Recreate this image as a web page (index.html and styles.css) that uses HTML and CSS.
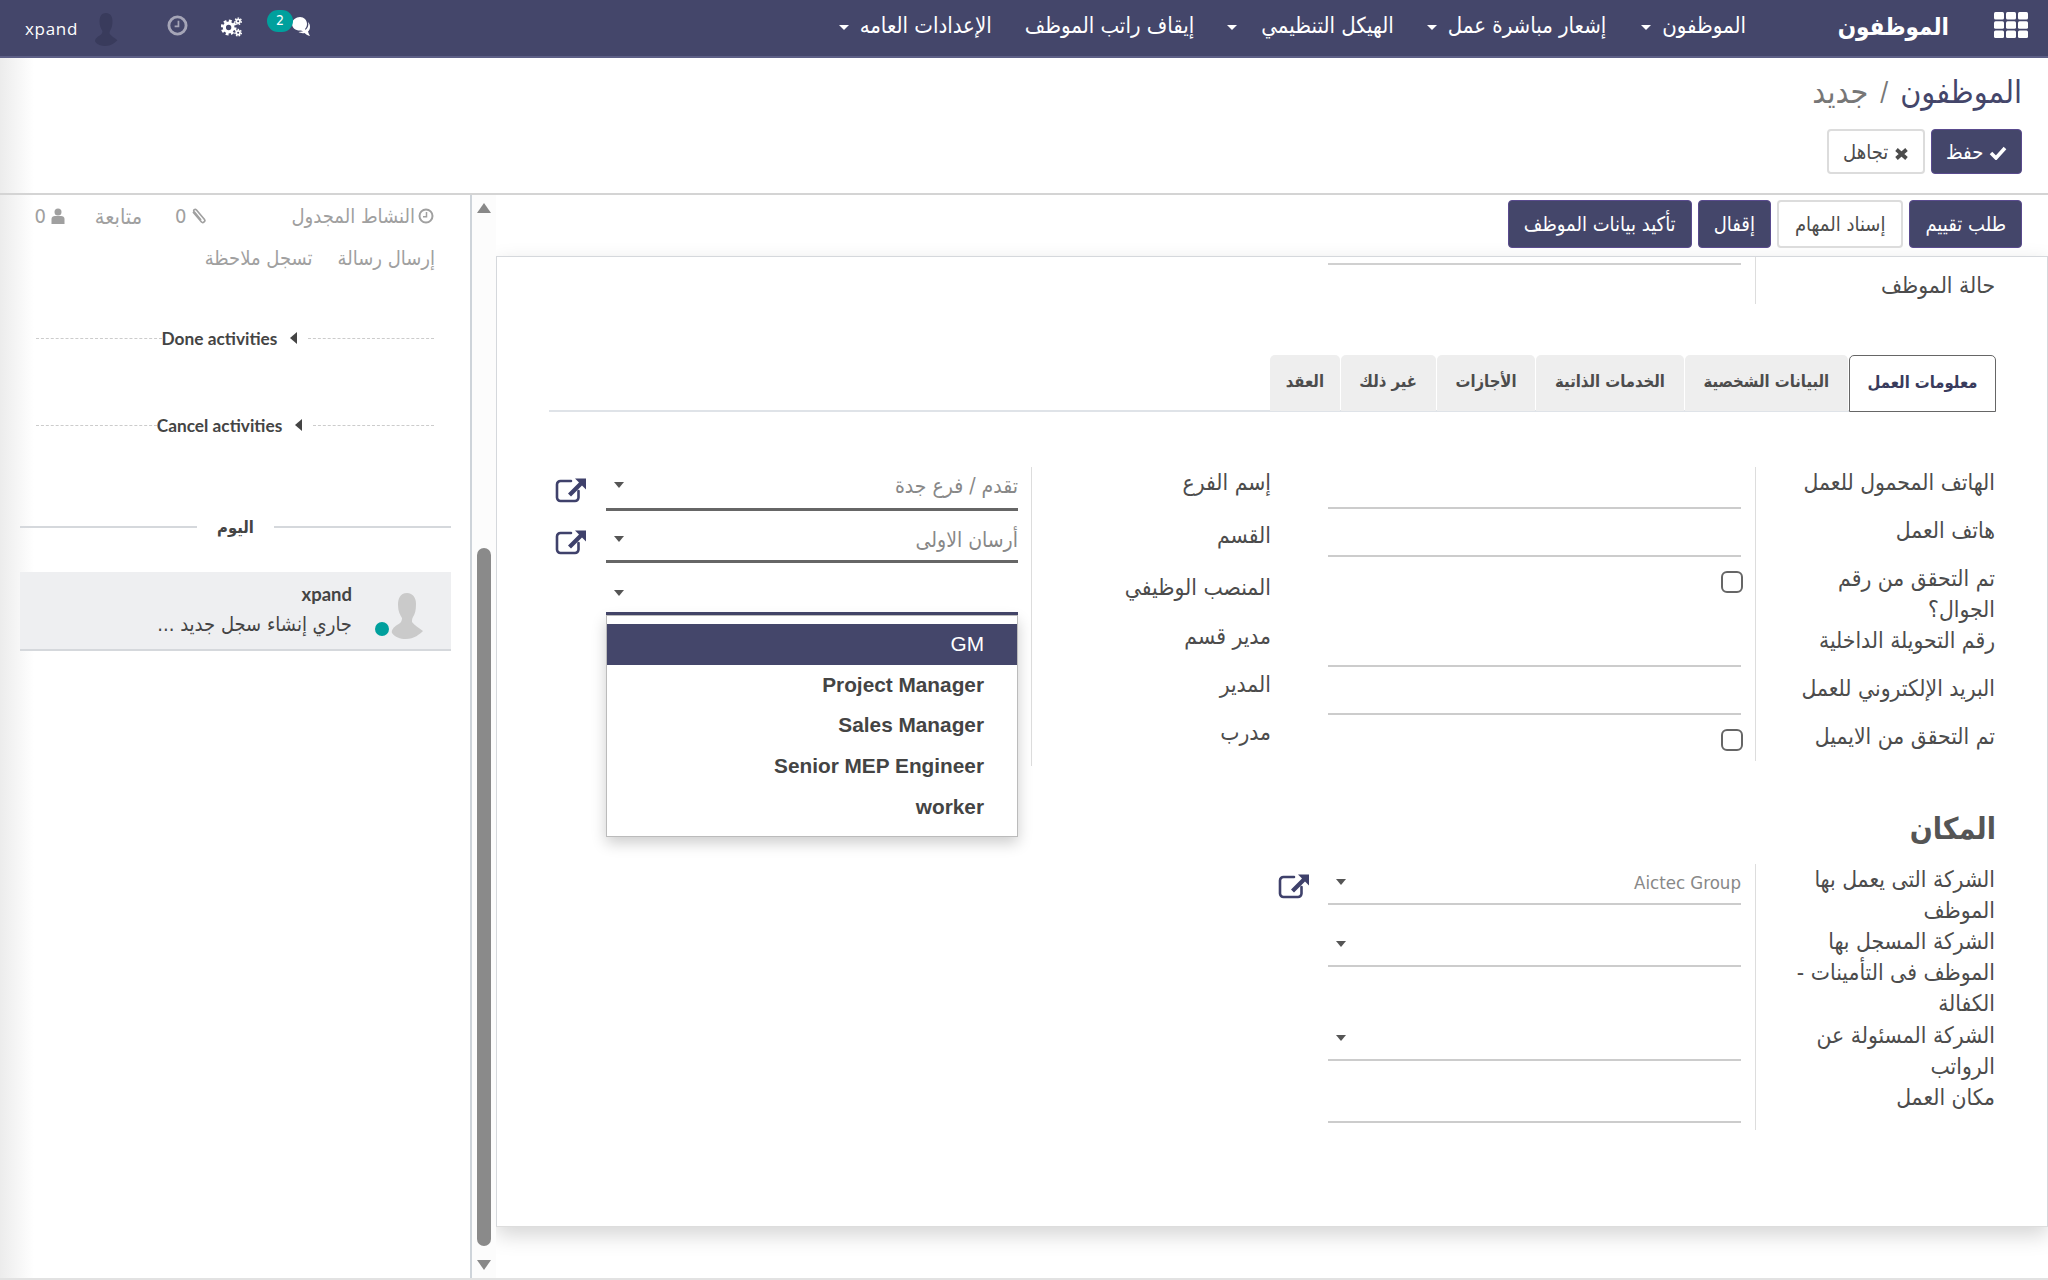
FILE: index.html
```html
<!DOCTYPE html>
<html lang="ar" dir="rtl">
<head>
    <meta charset="UTF-8">
    <title>الموظفون</title>
    <link rel="stylesheet" href="styles.css">
</head>
<body>
    <svg class="sprites" xmlns="http://www.w3.org/2000/svg">
        <symbol id="i-ext" viewBox="0 0 31 27">
            <path d="M16 5H5.5A3.5 3.5 0 0 0 2 8.500V21.500A3.500 3.500 0 0 0 5.500 25H20A3.500 3.500 0 0 0 23.500 21.500V15" fill="none" stroke="currentColor" stroke-width="2.600" stroke-linecap="round"/>
            <path d="M13 17.500L24 6.500L20 2.500H31V13.500L27 9.500L16 20.500Z" fill="currentColor"/>
        </symbol>
        <symbol id="i-user" viewBox="0 0 32 46">
            <path d="M16 0C9 0 7 6 7 12C7 18 9 22 11 25C11 28 10 30 6 32C3 34 0 37 1 40C4 44 9 46 15 46C23 46 29 41 32 38C28 35 23 32 21 29C21 27 21 26 22 24C24 21 25 17 25 11C25 5 22 0 16 0Z" fill="currentColor"/>
        </symbol>
    </svg>

    <header class="navbar">
        <svg class="apps" viewBox="0 0 34 26">
            <g fill="#fff">
                <rect x="0" y="0" width="10" height="7.500" rx="1.500"/><rect x="12" y="0" width="10" height="7.500" rx="1.500"/><rect x="24" y="0" width="10" height="7.500" rx="1.500"/>
                <rect x="0" y="9.200" width="10" height="7.500" rx="1.500"/><rect x="12" y="9.200" width="10" height="7.500" rx="1.500"/><rect x="24" y="9.200" width="10" height="7.500" rx="1.500"/>
                <rect x="0" y="18.500" width="10" height="7.500" rx="1.500"/><rect x="12" y="18.500" width="10" height="7.500" rx="1.500"/><rect x="24" y="18.500" width="10" height="7.500" rx="1.500"/>
            </g>
        </svg>
        <a class="brand">الموظفون</a>
        <nav class="menu">
            <a class="menu-item has-caret">الموظفون</a>
            <a class="menu-item has-caret">إشعار مباشرة عمل</a>
            <a class="menu-item has-caret menu-item-wide">الهيكل التنظيمي</a>
            <a class="menu-item">إيقاف راتب الموظف</a>
            <a class="menu-item has-caret">الإعدادات العامه</a>
        </nav>
        <div class="systray">
            <div class="tray-chat">
                <svg class="chat-icon" viewBox="0 0 18 19">
                    <path d="M0 7C0 3 4 0 8 0C12 0 15 3 15 7C15 9 14 11 13 12C13.500 13 14.500 14 15 15C12.500 15 10.500 14 9 13.500C4 14 0 11 0 7Z" fill="#fff"/>
                    <path d="M16 5C17.500 6.500 18 8 18 10C18 12 17 13.500 16 14.500C16.500 16 17 17.500 18 19C15.500 18.500 13.500 17 12.500 16C10.500 16.500 8 16 6.500 15C11 15 18 12 16 5Z" fill="#fff"/>
                </svg>
                <span class="tray-badge">2</span>
            </div>
            <svg class="gears-icon" viewBox="0 0 22 21">
                <circle cx="8" cy="11" r="4.500" fill="none" stroke="#fff" stroke-width="3.400"/>
                <circle cx="8" cy="11" r="7" fill="none" stroke="#fff" stroke-width="2.600" stroke-dasharray="3 2.500"/>
                <circle cx="18" cy="4.500" r="2" fill="none" stroke="#fff" stroke-width="1.800"/>
                <circle cx="18" cy="4.500" r="3.400" fill="none" stroke="#fff" stroke-width="1.400" stroke-dasharray="1.600 1.400"/>
                <circle cx="18" cy="16.500" r="2" fill="none" stroke="#fff" stroke-width="1.800"/>
                <circle cx="18" cy="16.500" r="3.400" fill="none" stroke="#fff" stroke-width="1.400" stroke-dasharray="1.600 1.400"/>
            </svg>
            <svg class="clock-icon" viewBox="0 0 22 22">
                <circle cx="11" cy="11" r="9" fill="none" stroke="currentColor" stroke-width="3"/>
                <path d="M12 6V12H8" fill="none" stroke="currentColor" stroke-width="1.800"/>
            </svg>
            <svg class="tray-avatar" viewBox="0 0 32 46"><use href="#i-user"/></svg>
            <span class="tray-name">xpand</span>
        </div>
    </header>

    <section class="control-head">
        <h1 class="crumbs"><a>الموظفون</a><span class="crumb-sep">/</span><span class="crumb-now">جديد</span></h1>
        <div class="head-buttons">
            <button class="btn btn-primary">
                <svg class="btn-sign" viewBox="0 0 18 14"><path d="M2 7L7 12L16 2" fill="none" stroke="currentColor" stroke-width="3.600"/></svg>
                حفظ
            </button>
            <button class="btn btn-plain">
                <svg class="btn-sign btn-sign-x" viewBox="0 0 15 12"><path d="M2.500 1.500L12.500 10.500M12.500 1.500L2.500 10.500" fill="none" stroke="currentColor" stroke-width="3.800"/></svg>
                تجاهل
            </button>
        </div>
    </section>

    <div class="workspace">
        <main class="form-pane">
            <div class="statusbar">
                <button class="btn btn-primary btn-tall">طلب تقييم</button>
                <button class="btn btn-plain btn-tall">إسناد المهام</button>
                <button class="btn btn-primary btn-tall">إقفال</button>
                <button class="btn btn-primary btn-tall">تأكيد بيانات الموظف</button>
            </div>
            <div class="sheet">
                <div class="state-row">
                    <label class="field-label">حالة الموظف</label>
                    <div class="field-value state-value"></div>
                </div>

                <div class="tabs">
                    <a class="tab tab-active">معلومات العمل</a>
                    <a class="tab">البيانات الشخصية</a>
                    <a class="tab">الخدمات الذاتية</a>
                    <a class="tab">الأجازات</a>
                    <a class="tab">غير ذلك</a>
                    <a class="tab tab-last">العقد</a>
                </div>

                <div class="columns">
                    <div class="field-group group-contact">
                        <label class="field-label flush">الهاتف المحمول للعمل</label>
                        <div class="field-value"><span class="input-line"></span></div>
                        <label class="field-label">هاتف العمل</label>
                        <div class="field-value"><span class="input-line"></span></div>
                        <label class="field-label">تم التحقق من رقم الجوال؟</label>
                        <div class="field-value"><input class="check" type="checkbox"></div>
                        <label class="field-label flush">رقم التحويلة الداخلية</label>
                        <div class="field-value"><span class="input-line"></span></div>
                        <label class="field-label">البريد الإلكتروني للعمل</label>
                        <div class="field-value"><span class="input-line"></span></div>
                        <label class="field-label">تم التحقق من الايميل</label>
                        <div class="field-value"><input class="check" type="checkbox"></div>
                    </div>

                    <div class="field-group group-job">
                        <label class="field-label flush">إسم الفرع</label>
                        <div class="field-value">
                            <span class="input-line line-dark select"><span class="select-text">تقدم / فرع جدة</span><i class="select-caret"></i></span>
                            <svg class="ext-link"><use href="#i-ext"/></svg>
                        </div>
                        <label class="field-label lower">القسم</label>
                        <div class="field-value">
                            <span class="input-line line-dark select line-mid"><span class="select-text">أرسان الاولى</span><i class="select-caret"></i></span>
                            <svg class="ext-link"><use href="#i-ext"/></svg>
                        </div>
                        <label class="field-label lower">المنصب الوظيفي</label>
                        <div class="field-value">
                            <span class="input-line line-focus select"><span class="select-text"></span><i class="select-caret"></i></span>
                            <ul class="dropdown">
                                <li class="dropdown-item is-active">GM</li>
                                <li class="dropdown-item">Project Manager</li>
                                <li class="dropdown-item">Sales Manager</li>
                                <li class="dropdown-item">Senior MEP Engineer</li>
                                <li class="dropdown-item">worker</li>
                            </ul>
                        </div>
                        <label class="field-label">مدير قسم</label>
                        <div class="field-value"></div>
                        <label class="field-label">المدير</label>
                        <div class="field-value"></div>
                        <label class="field-label">مدرب</label>
                        <div class="field-value"></div>
                    </div>
                </div>

                <h2 class="section-title">المكان</h2>
                <div class="columns">
                    <div class="field-group group-place">
                        <label class="field-label flush">الشركة التى يعمل بها الموظف</label>
                        <div class="field-value">
                            <span class="input-line select"><span class="select-text latin">Aictec Group</span><i class="select-caret"></i></span>
                            <svg class="ext-link"><use href="#i-ext"/></svg>
                        </div>
                        <label class="field-label flush">الشركة المسجل بها الموظف فى التأمينات - الكفالة</label>
                        <div class="field-value"><span class="input-line select"><span class="select-text"></span><i class="select-caret"></i></span></div>
                        <label class="field-label flush">الشركة المسئولة عن الرواتب</label>
                        <div class="field-value"><span class="input-line select"><span class="select-text"></span><i class="select-caret"></i></span></div>
                        <label class="field-label flush">مكان العمل</label>
                        <div class="field-value"><span class="input-line"></span></div>
                    </div>
                </div>
            </div>
        </main>

        <div class="scroll-rail">
            <i class="rail-arrow"></i>
            <i class="rail-thumb"></i>
            <i class="rail-arrow rail-arrow-down"></i>
        </div>

        <aside class="chatter">
            <div class="chatter-top">
                <a class="chatter-link">
                    <svg class="mini-icon" viewBox="0 0 16 16"><circle cx="8" cy="8" r="6.500" fill="none" stroke="currentColor" stroke-width="2"/><path d="M8.500 4V8.800H5" fill="none" stroke="currentColor" stroke-width="1.500"/></svg>
                    النشاط المجدول
                </a>
                <span class="chatter-stat chatter-stat-clip">
                    <svg class="mini-icon" viewBox="0 0 16 16"><path d="M2 4L10.500 14C12 15.500 15 13 13.500 11.500L5.500 2C4 .5 2 2 3 3.500L10 12" fill="none" stroke="currentColor" stroke-width="1.700"/></svg>
                    0
                </span>
                <a class="chatter-follow">متابعة</a>
                <span class="chatter-stat">
                    <svg class="mini-icon" viewBox="0 0 16 16"><circle cx="8" cy="4" r="3.500" fill="currentColor"/><path d="M1.500 16V11C1.500 9 3 8 5 8H11C13 8 14.500 9 14.500 11V16Z" fill="currentColor"/></svg>
                    0
                </span>
            </div>
            <div class="chatter-actions">
                <a class="chatter-link">إرسال رسالة</a>
                <a class="chatter-link">تسجل ملاحظة</a>
            </div>

            <div class="fold fold-done">
                <i class="fold-line"></i><i class="fold-caret"></i><b class="fold-text">Done activities</b><i class="fold-line"></i>
            </div>
            <div class="fold fold-cancel">
                <i class="fold-line"></i><i class="fold-caret"></i><b class="fold-text">Cancel activities</b><i class="fold-line"></i>
            </div>

            <div class="day-sep"><i class="day-line"></i><b class="day-text">اليوم</b><i class="day-line"></i></div>

            <article class="message">
                <div class="msg-avatar">
                    <svg class="msg-face" viewBox="0 0 32 46"><use href="#i-user"/></svg>
                    <i class="msg-dot"></i>
                </div>
                <div class="msg-body">
                    <b class="msg-author">xpand</b>
                    <p class="msg-text">جاري إنشاء سجل جديد ...</p>
                </div>
            </article>
        </aside>
    </div>
</body>
</html>
```

FILE: styles.css
```css
* {
    box-sizing: border-box;
}
html, body {
    margin: 0;
    height: 1280px;
    overflow: hidden;
}
body {
    font-family: "DejaVu Sans Condensed", "DejaVu Sans", sans-serif;
    font-size: 16px;
    color: #4c4c4c;
    background: linear-gradient(to right, #ececec, #fff 34px);
}
.sprites {
    display: none;
}
a {
    text-decoration: none;
}
i {
    display: block;
}

/* top bar */
.navbar {
    display: flex;
    align-items: center;
    height: 58px;
    padding-right: 20px;
    background: #44466a;
    border-bottom: 2px solid #5d5f86;
    color: #fff;
}
.apps {
    width: 34px;
    height: 26px;
    margin-top: -6px;
}
.brand {
    width: 112px;
    margin-right: 45px;
    margin-top: -2px;
    font-size: 24px;
    font-weight: bold;
    white-space: nowrap;
}
.menu {
    display: flex;
    align-items: center;
    margin-top: -5px;
    margin-right: 91px;
}
.menu-item {
    display: flex;
    align-items: center;
    gap: 11px;
    margin-left: 33px;
    font-size: 22px;
    white-space: nowrap;
}
.menu-item:first-child {
    margin-left: 35px;
}
.menu-item-wide {
    gap: 24px;
}
.has-caret::after {
    content: "";
    margin-top: 3px;
    border-top: 5px solid #fff;
    border-left: 5px solid transparent;
    border-right: 5px solid transparent;
}
.systray {
    display: flex;
    align-items: center;
    margin-right: auto;
    padding-left: 25px;
}
.tray-chat {
    position: relative;
    width: 18px;
    height: 20px;
    margin-left: 50px;
    margin-top: -6px;
}
.chat-icon {
    width: 18px;
    height: 19px;
    display: block;
    margin-top: 2px;
}
.tray-badge {
    position: absolute;
    top: -5px;
    right: 17px;
    width: 26px;
    height: 22px;
    border-radius: 11px;
    background: #00a09d;
    font-family: "DejaVu Sans Condensed", sans-serif;
    font-size: 14px;
    line-height: 20px;
    text-align: center;
}
.gears-icon {
    width: 21px;
    height: 20px;
    margin-left: 33px;
    margin-top: -2px;
}
.clock-icon {
    width: 21px;
    height: 21px;
    margin-left: 45px;
    margin-top: -5px;
    color: #a5a5b7;
}
.tray-avatar {
    width: 32px;
    height: 33px;
    margin-left: 12px;
    margin-top: 2px;
    color: #393b5c;
}
.tray-name {
    font-family: "Open Sans", sans-serif;
    font-size: 17px;
    letter-spacing: 0.7px;
    direction: ltr;
}

/* breadcrumb and save buttons */
.control-head {
    height: 137px;
    padding: 14px 26px 0;
    border-bottom: 2px solid #d4d4d4;
}
.crumbs {
    display: flex;
    align-items: center;
    margin: 0;
    height: 40px;
    font-size: 32px;
    font-weight: normal;
}
.crumbs a {
    color: #44466a;
}
.crumb-sep {
    margin: 0 12px;
    color: #777;
    font-size: 26px;
}
.crumb-now {
    color: #777;
}
.head-buttons {
    display: flex;
    gap: 6px;
    margin-top: 17px;
}
.btn {
    height: 45px;
    padding: 0 15px;
    border-radius: 4px;
    font-family: inherit;
    font-size: 20px;
    white-space: nowrap;
}
.btn-tall {
    height: 48px;
}
.btn-primary {
    background: #44466a;
    border: 1px solid #5a4b8e;
    color: #fff;
}
.btn-plain {
    padding: 0 16px;
    background: #fff;
    border: 2px solid #dcdcdc;
    color: #4c4c4c;
}
.head-buttons .btn {
    padding: 0 14px;
}
.btn-sign {
    width: 18px;
    height: 14px;
    vertical-align: -1px;
}
.btn-sign-x {
    width: 15px;
    height: 12px;
}

/* form */
.workspace {
    display: flex;
    height: 1085px;
    border-bottom: 2px solid #e2e2e2;
}
.form-pane {
    flex: 1;
    min-width: 0;
}
.statusbar {
    display: flex;
    gap: 6px;
    height: 61px;
    padding: 5px 26px 0;
}
.sheet {
    height: 971px;
    padding: 0 51px 0 52px;
    background: #fff;
    border: 1px solid #d5d8dc;
    border-bottom-color: #ddd;
    box-shadow: 0 8px 20px rgba(0, 0, 0, 0.17);
}
.state-row {
    display: grid;
    grid-template-columns: 240px 428px;
    height: 47px;
}
.state-value::before {
    content: "";
    display: block;
    margin-top: 6px;
    height: 2px;
    background: #d0d0d0;
}
.field-label {
    padding-top: 6px;
    padding-left: 24px;
    padding-right: 1px;
    font-size: 22.700px;
    line-height: 31px;
    color: #4c4c4c;
}
.flush {
    padding-top: 0;
}
.lower {
    padding-top: 9px;
}
.state-row .field-label {
    padding-top: 13px;
}
.tabs {
    display: flex;
    height: 57px;
    margin-top: 51px;
    border-bottom: 2px solid #dfe3e8;
}
.tab {
    display: flex;
    align-items: center;
    margin-left: 1px;
    margin-bottom: -1px;
    padding: 0 18.800px 4px;
    background: #eee;
    border-radius: 5px 5px 0 0;
    font-weight: bold;
    font-size: 16.500px;
    color: #4c4c4c;
    white-space: nowrap;
}
.tab-last {
    padding: 0 15.500px 4px;
    margin-left: 0;
}
.tab-active {
    margin-bottom: -2px;
    padding: 0 17.500px 2px;
    background: #fff;
    border: 1px solid #666;
    color: #393b5c;
}
.columns {
    display: grid;
    grid-template-columns: 724px 723px;
}
.field-group {
    display: grid;
    grid-template-columns: 240px 1fr;
}
.group-contact, .group-job {
    margin-top: 55px;
}
.group-contact {
    align-self: start;
    grid-template-rows: 42px 48px 68px 42px 48px 46px;
}
.group-job {
    grid-template-rows: 44px 52px 52px 48px 48px 55px;
}
.group-place {
    grid-template-rows: 62px 94px 62px 48px;
}
.field-value {
    position: relative;
    padding: 0 14px 0 56px;
    border-right: 1px solid #ddd;
}
.state-row .state-value {
    padding-left: 0;
}
.input-line {
    display: block;
    height: 100%;
    border-bottom: 2px solid #ccc;
}
.group-job .field-value {
    display: flex;
    flex-direction: column;
    justify-content: flex-end;
    padding-right: 13px;
    padding-left: 57px;
}
.group-job .input-line {
    height: 44px;
}
.group-job .line-mid {
    height: 42px;
}
.group-job .line-focus {
    height: 40px;
}
.group-place .input-line {
    height: 41px;
}
.line-dark {
    border-bottom: 3px solid #666;
}
.line-focus {
    border-bottom: 3px solid #44466a;
}
.select {
    display: flex;
    justify-content: space-between;
    padding: 5px 0 0 8px;
    color: #888;
    font-size: 21px;
}
.select-text {
    line-height: 28px;
}
.latin {
    font-size: 18.500px;
}
.select-caret {
    width: 0;
    height: 0;
    margin-top: 10px;
    border-top: 6px solid #555;
    border-left: 5px solid transparent;
    border-right: 5px solid transparent;
}
.ext-link {
    position: absolute;
    left: 6px;
    top: 8px;
    width: 31px;
    height: 27px;
    color: #3f416b;
}
.group-job .ext-link {
    top: auto;
    bottom: 8px;
}
.check {
    appearance: none;
    display: block;
    width: 22px;
    height: 22px;
    margin: 14px -2px 0 0;
    border: 2px solid #666;
    border-radius: 6px;
    background: #fff;
}
.dropdown {
    position: absolute;
    top: 100%;
    right: 13px;
    width: 412px;
    height: 222px;
    margin: 0;
    padding: 8px 0 0;
    list-style: none;
    background: #fff;
    border: 1px solid #bbb;
    box-shadow: 0 6px 14px rgba(0, 0, 0, 0.2);
    z-index: 5;
    font-family: "Liberation Sans", sans-serif;
}
.dropdown-item {
    height: 40.700px;
    padding-right: 33px;
    font-size: 20.800px;
    font-weight: bold;
    line-height: 40px;
    color: #444;
}
.is-active {
    background: #44466a;
    color: #fff;
    font-weight: normal;
}
.section-title {
    margin: 43px 0 0;
    height: 55px;
    font-size: 30px;
    line-height: 40px;
    font-weight: bold;
    color: #555;
}

/* fake scrollbar */
.scroll-rail {
    display: flex;
    flex-direction: column;
    align-items: center;
    width: 24px;
    padding-top: 8px;
    background: #fcfcfc;
}
.rail-arrow {
    width: 0;
    height: 0;
    border-bottom: 10px solid #888;
    border-left: 7px solid transparent;
    border-right: 7px solid transparent;
}
.rail-thumb {
    width: 14px;
    height: 698px;
    margin-top: 335px;
    border-radius: 7px;
    background: #8a8a8a;
}
.rail-arrow-down {
    margin-top: 14px;
    border-bottom: 0;
    border-top: 10px solid #888;
}

/* chatter */
.chatter {
    width: 472px;
    padding: 0 19px 0 20px;
    border-right: 2px solid #ced4da;
    overflow: hidden;
}
.chatter-top {
    display: flex;
    align-items: center;
    height: 44px;
    padding: 0 17px 2px 16px;
    font-size: 20px;
    color: #a0a0a0;
}
.chatter-link {
    display: flex;
    align-items: center;
    gap: 3px;
    color: #a0a0a0;
    white-space: nowrap;
}
.chatter-stat {
    display: flex;
    align-items: center;
    gap: 4px;
}
.chatter-stat-clip {
    margin-right: 85px;
}
.chatter-follow {
    margin-right: 33px;
    font-size: 21.500px;
    color: #a0a0a0;
}
.chatter-top .chatter-stat:last-child {
    margin-right: 29px;
}
.mini-icon {
    width: 16px;
    height: 16px;
}
.chatter-actions {
    display: flex;
    gap: 25px;
    height: 30px;
    padding: 0 16px;
    margin-top: 4px;
    font-size: 20px;
    line-height: 30px;
}
.fold {
    display: flex;
    align-items: center;
    height: 24px;
    padding: 0 17px 0 16px;
}
.fold-done {
    margin-top: 53px;
}
.fold-cancel {
    margin-top: 63px;
}
.fold-line {
    flex: 1;
    border-top: 1px dashed #ccc;
}
.fold-caret {
    width: 0;
    height: 0;
    margin: 0 11px 0 13px;
    border-top: 6px solid transparent;
    border-bottom: 6px solid transparent;
    border-left: 0;
    border-right: 7px solid #444;
}
.fold-text {
    font-family: "Lato", sans-serif;
    font-size: 17.300px;
    color: #444;
    direction: ltr;
}
.day-sep {
    display: flex;
    align-items: center;
    gap: 20px;
    height: 30px;
    margin-top: 75px;
}
.day-line {
    flex: 1;
    border-top: 2px solid #d5d8dc;
}
.day-text {
    font-size: 16.500px;
    color: #444;
}
.message {
    display: flex;
    height: 79px;
    margin-top: 30px;
    background: #eeeff1;
    border-bottom: 2px solid #d5d8dc;
}
.msg-avatar {
    position: relative;
    width: 80px;
    margin-right: 19px;
    padding: 21px 8px 0 0;
}
.msg-face {
    display: block;
    width: 34px;
    height: 46px;
    color: #cacaca;
}
.msg-dot {
    position: absolute;
    top: 50px;
    left: 23px;
    width: 14px;
    height: 14px;
    border-radius: 50%;
    background: #00a09d;
}
.msg-body {
    padding-top: 9px;
}
.msg-author {
    display: block;
    font-family: "Lato", sans-serif;
    font-size: 18.500px;
    line-height: 26px;
    color: #444;
}
.msg-text {
    margin: 2px 0 0;
    font-size: 20px;
    line-height: 30px;
    color: #444;
}
```
